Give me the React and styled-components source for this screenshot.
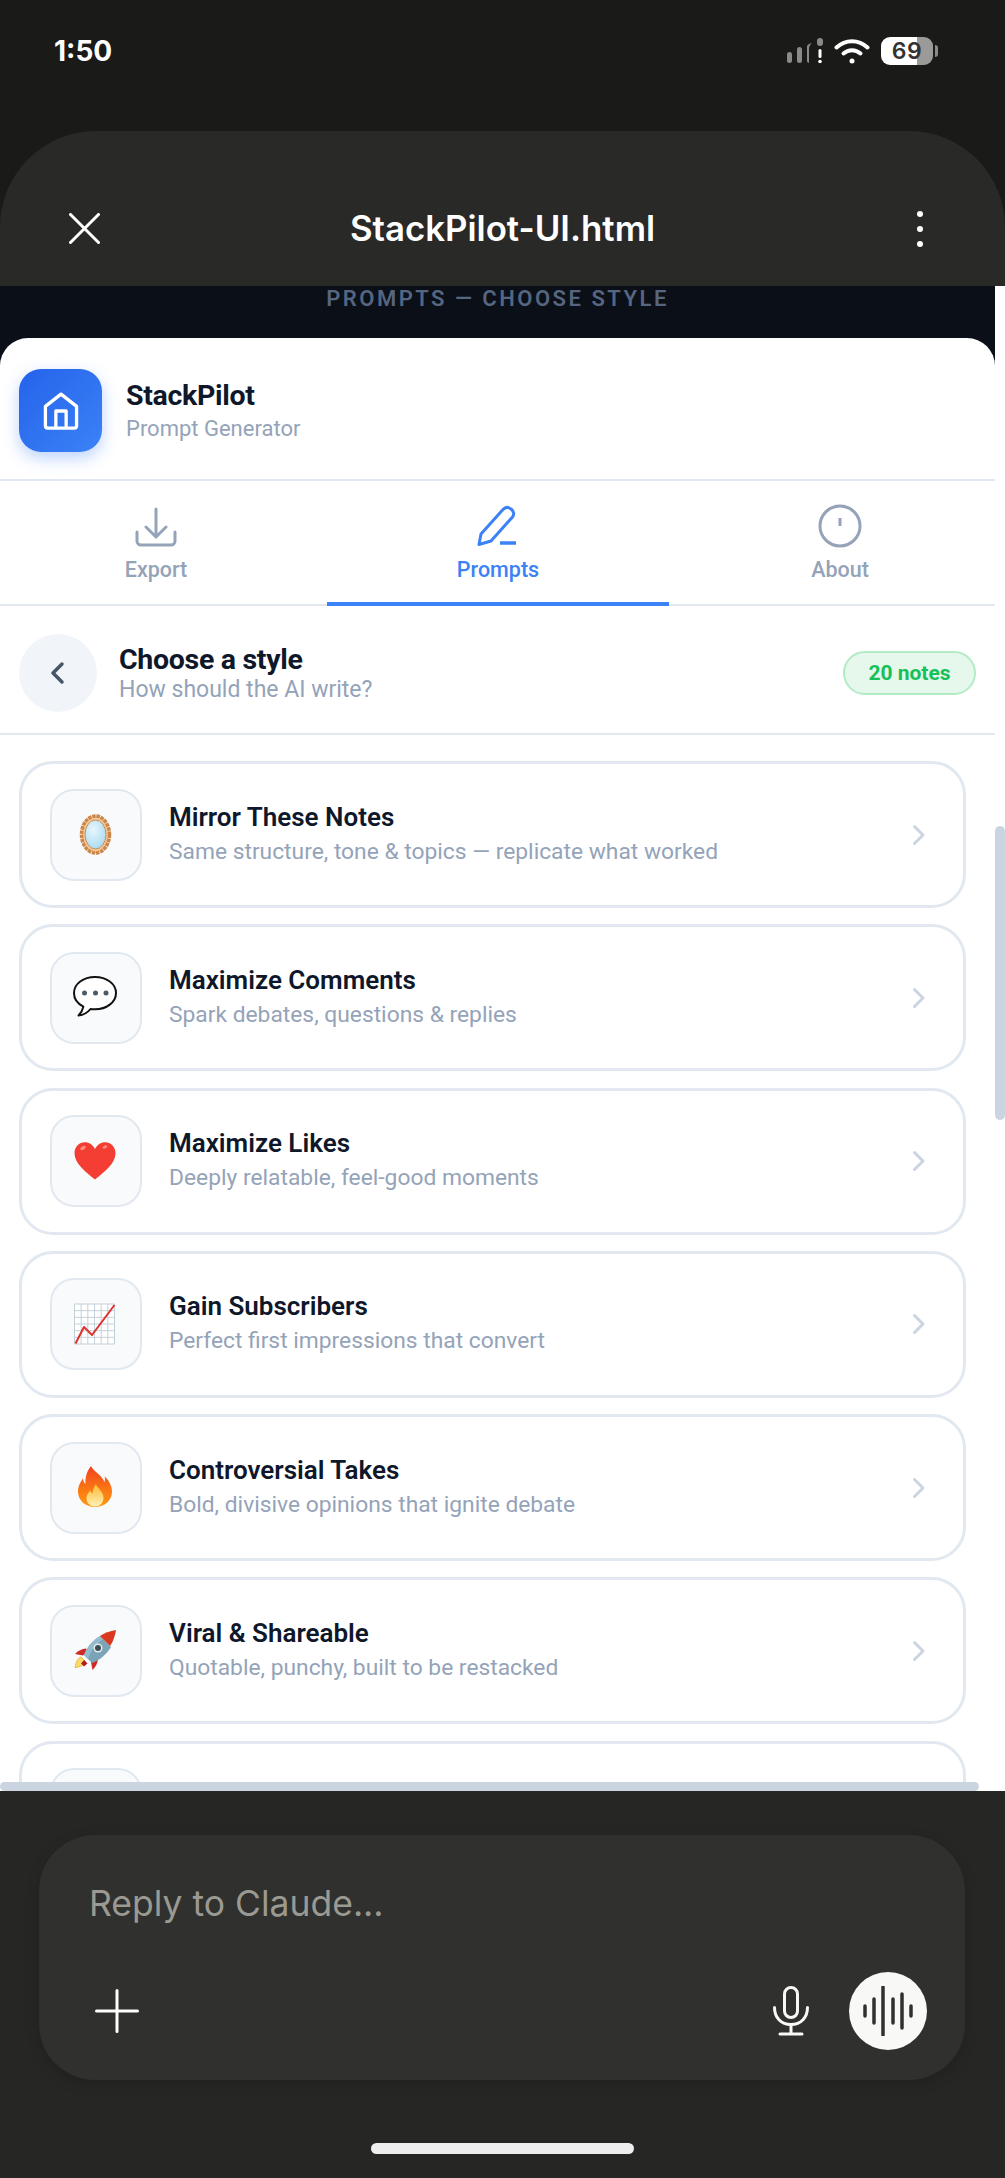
import React from "react";
import styled, { createGlobalStyle } from "styled-components";

const GlobalStyle = createGlobalStyle`
  html, body {
    margin: 0;
    padding: 0;
    background: #1a1a19;
  }
  * {
    box-sizing: border-box;
  }
`;

const Screen = styled.div`
  width: 1005px;
  height: 2178px;
  display: flex;
  flex-direction: column;
  overflow: hidden;
  background: #1a1a19;
  font-family: Inter, "Liberation Sans", sans-serif;
`;

const StatusBar = styled.div`
  height: 131px;
  flex: none;
  display: flex;
  justify-content: space-between;
  align-items: flex-start;
  padding: 35px 72px 0 54px;
`;

const Time = styled.div`
  color: #fff;
  font-size: 28px;
  font-weight: 700;
  line-height: 32px;
`;

const StatusIcons = styled.div`
  display: flex;
  align-items: center;
  gap: 11px;
  margin-top: 2px;
`;

const Battery = styled.div`
  width: 52px;
  height: 28px;
  border-radius: 9px;
  background: linear-gradient(90deg, #fff 69%, #9a9a98 69%);
  color: #333;
  font-size: 23px;
  font-weight: 600;
  line-height: 28px;
  text-align: center;
  letter-spacing: 0.5px;
  position: relative;
  &::after {
    content: "";
    position: absolute;
    left: 54px;
    top: 8px;
    width: 3px;
    height: 12px;
    border-radius: 0 3px 3px 0;
    background: #8a8a88;
  }
`;

const ViewerHeader = styled.div`
  height: 155px;
  flex: none;
  background: #292928;
  border-radius: 96px 96px 0 0;
  display: flex;
  align-items: center;
  justify-content: space-between;
  padding: 40px 82px 0 69px;
  position: relative;
`;

const ViewerTitle = styled.div`
  position: absolute;
  left: 0;
  right: 0;
  top: 75px;
  text-align: center;
  color: #fff;
  font-size: 34.8px;
  font-weight: 600;
  line-height: 44px;
`;

const Dots = styled.div`
  display: flex;
  flex-direction: column;
  gap: 9px;
  span {
    width: 6px;
    height: 6px;
    border-radius: 50%;
    background: #fff;
  }
`;

const Preview = styled.div`
  flex: 1;
  min-height: 0;
  display: flex;
  background: #fff;
  position: relative;
`;

const PreviewColumn = styled.div`
  width: 995px;
  flex: none;
  display: flex;
  flex-direction: column;
  background: #0b0f17;
  overflow: hidden;
  font-family: Roboto, "Liberation Sans", sans-serif;
`;

const Caption = styled.div`
  height: 52px;
  flex: none;
  padding-top: 2px;
  text-align: center;
  color: #566580;
  font-size: 22px;
  font-weight: 600;
  line-height: 22px;
  letter-spacing: 2.5px;
`;

const Sheet = styled.div`
  flex: 1;
  min-height: 0;
  background: #fff;
  border-radius: 28px 28px 0 0;
  display: flex;
  flex-direction: column;
  overflow: hidden;
`;

const BrandRow = styled.div`
  height: 143px;
  flex: none;
  display: flex;
  align-items: center;
  gap: 24px;
  padding: 4px 19px 0;
  border-bottom: 2px solid #e2e8f0;
`;

const BrandIcon = styled.div`
  width: 83px;
  height: 83px;
  border-radius: 22px;
  background: linear-gradient(135deg, #2563eb, #3b82f6);
  box-shadow: 0 6px 16px rgba(59, 130, 246, 0.35);
  display: flex;
  align-items: center;
  justify-content: center;
  svg {
    display: block;
  }
`;

const BrandName = styled.div`
  color: #0f172a;
  font-size: 28.5px;
  font-weight: 700;
  line-height: 34px;
  letter-spacing: -0.3px;
`;

const BrandSub = styled.div`
  color: #94a3b8;
  font-size: 22px;
  line-height: 28px;
  margin-top: 2px;
`;

const Tabs = styled.div`
  height: 125px;
  flex: none;
  margin-left: -15px;
  width: 1026px;
  display: grid;
  grid-template-columns: repeat(3, 342px);
  position: relative;
  &::after {
    content: "";
    position: absolute;
    left: 15px;
    width: 995px;
    bottom: 0;
    height: 2px;
    background: #e2e8f0;
  }
`;

const Tab = styled.div`
  display: flex;
  flex-direction: column;
  align-items: center;
  padding-top: 20px;
  position: relative;
  z-index: 1;
  color: ${(p) => (p.$active ? "#3b82f6" : "#94a3b8")};
  font-size: 21.5px;
  font-weight: 500;
  line-height: 26px;
  border-bottom: 4px solid ${(p) => (p.$active ? "#3b82f6" : "transparent")};
  svg {
    display: block;
    margin-bottom: 6px;
  }
`;

const StyleBar = styled.div`
  height: 129px;
  flex: none;
  display: flex;
  align-items: center;
  padding: 6px 19px 0;
  border-bottom: 2px solid #e2e8f0;
`;

const BackButton = styled.div`
  width: 78px;
  height: 78px;
  border-radius: 50%;
  background: #f1f5f9;
  display: flex;
  align-items: center;
  justify-content: center;
  flex: none;
  margin-right: 22px;
`;

const StyleText = styled.div`
  flex: 1;
  padding-top: 2px;
`;

const StyleTitle = styled.div`
  color: #0f172a;
  font-size: 28.5px;
  font-weight: 700;
  line-height: 31px;
  letter-spacing: -0.3px;
`;

const StyleSub = styled.div`
  color: #94a3b8;
  font-size: 23px;
  line-height: 29px;
`;

const NotesBadge = styled.div`
  width: 133px;
  height: 44px;
  border-radius: 22px;
  background: #e6f7ec;
  border: 2px solid #b3ebc6;
  color: #16c05a;
  font-size: 21px;
  font-weight: 700;
  line-height: 40px;
  text-align: center;
`;

const StyleList = styled.div`
  flex: 1;
  min-height: 0;
  overflow: hidden;
  display: flex;
  flex-direction: column;
  gap: 16.3px;
  padding: 26px 29px 0 19px;
`;

const StyleCard = styled.div`
  height: 147px;
  flex: none;
  display: flex;
  align-items: center;
  border: 3px solid #e2e8f0;
  border-radius: 34px;
  padding: 0 37px 0 28px;
  background: #fff;
`;

const EmojiBox = styled.div`
  width: 92px;
  height: 92px;
  flex: none;
  border: 2px solid #e2e8f0;
  border-radius: 24px;
  background: #f8fafc;
  display: flex;
  align-items: center;
  justify-content: center;
  margin-right: 27px;
  svg {
    display: block;
  }
`;

const CardText = styled.div`
  flex: 1;
  padding-bottom: 2px;
`;

const CardTitle = styled.div`
  color: #0f172a;
  font-size: 26px;
  font-weight: 600;
  line-height: 32px;
`;

const CardSub = styled.div`
  color: #94a3b8;
  font-size: 22.8px;
  line-height: 30px;
  margin-top: 4px;
`;

const ScrollTrack = styled.div`
  width: 10px;
  flex: none;
  padding-top: 540px;
`;

const ScrollThumb = styled.div`
  height: 294px;
  border-radius: 5px;
  background: #cbd5e1;
`;

const HorizontalThumb = styled.div`
  position: absolute;
  left: 0;
  bottom: 0;
  width: 979px;
  height: 9px;
  border-radius: 5px;
  background: #cbd5e1;
`;

const BottomArea = styled.div`
  height: 387px;
  flex: none;
  background: #262624;
  padding: 44px 40px 0 39px;
  display: flex;
  flex-direction: column;
  align-items: center;
`;

const Composer = styled.div`
  width: 100%;
  height: 245px;
  border-radius: 56px;
  background: #30302e;
  box-shadow: 0 4px 14px rgba(0, 0, 0, 0.15);
  padding: 43px 38px 0 50px;
`;

const Placeholder = styled.div`
  color: #9a9a92;
  font-size: 35.5px;
  line-height: 52px;
`;

const ComposerActions = styled.div`
  display: flex;
  align-items: center;
  justify-content: space-between;
  margin-top: 42px;
`;

const ActionsRight = styled.div`
  display: flex;
  align-items: center;
  gap: 38px;
`;

const PlusWrap = styled.div`
  margin-left: 6px;
  svg {
    display: block;
  }
`;

const VoiceButton = styled.div`
  width: 78px;
  height: 78px;
  border-radius: 50%;
  background: #f8f8f6;
  display: flex;
  align-items: center;
  justify-content: center;
`;

const HomeIndicator = styled.div`
  width: 263px;
  height: 11px;
  border-radius: 6px;
  background: #eeeeee;
  margin-top: 63px;
`;

const SignalIcon = () => (
  <svg width="36" height="26" viewBox="0 0 36 26">
    <g fill="#8a8a8a">
      <rect x="0" y="14" width="5" height="11" rx="2.5" />
      <rect x="10" y="9" width="5" height="16" rx="2.5" />
      <path d="M23 25c-2.500-.2-3-1-3-2.500V9c0-1.500 1-3 5-4-2 1.500-3 3.500-3 6v14z" />
      <rect x="30" y="0" width="6" height="8" rx="3" />
    </g>
    <rect x="31.500" y="11" width="3" height="9" rx="1.500" fill="#fff" />
    <circle cx="33" cy="23.500" r="1.800" fill="#fff" />
  </svg>
);

const WifiIcon = () => (
  <svg width="36" height="26" viewBox="0 0 36 26" fill="none" stroke="#fff" strokeWidth="4" strokeLinecap="round">
    <path d="M2.500 9.500C11.500 1 24.500 1 33.500 9.500" />
    <path d="M9.500 15.500C14.500 11 21.500 11 26.500 15.500" />
    <circle cx="18" cy="23" r="2.500" fill="#fff" stroke="none" />
  </svg>
);

const CloseIcon = () => (
  <svg width="31" height="31" viewBox="0 0 31 31" stroke="#fff" strokeWidth="3" strokeLinecap="round">
    <path d="M1.500 1.500l28 28M29.500 1.500l-28 28" />
  </svg>
);

const HouseIcon = () => (
  <svg width="44" height="44" viewBox="0 0 24 24" fill="none" stroke="#fff" strokeWidth="1.800" strokeLinejoin="round">
    <path d="M3.500 9.500 12 2.800l8.500 6.700V20a1.300 1.300 0 0 1-1.300 1.300H4.800A1.300 1.300 0 0 1 3.500 20z" />
    <path d="M9.200 21.300V12h5.600v9.300" />
  </svg>
);

const ExportIcon = () => (
  <svg width="50" height="50" viewBox="0 0 50 50" fill="none" stroke="#94a3b8" strokeWidth="3" strokeLinecap="round" strokeLinejoin="round">
    <path d="M6 31v9a4 4 0 0 0 4 4h30a4 4 0 0 0 4-4v-9" />
    <path d="M25 8v28M15 26l10 10 10-10" />
  </svg>
);

const PenIcon = () => (
  <svg width="50" height="50" viewBox="0 0 50 50" fill="none" stroke="#3b82f6" strokeWidth="3">
    <path d="M6 43.500 8 33 30 8.500c2-2.300 5-2.800 8-.5s3.500 5.500 1.500 8L18 40z" strokeLinejoin="round" />
    <path d="M27 42h16" strokeWidth="3.500" />
  </svg>
);

const AboutIcon = () => (
  <svg width="50" height="50" viewBox="0 0 50 50" fill="none" stroke="#94a3b8" strokeWidth="3">
    <circle cx="25" cy="25" r="20" />
    <path d="M25 17v8" />
  </svg>
);

const BackChevron = () => (
  <svg width="16" height="24" viewBox="0 0 16 24" fill="none" stroke="#475569" strokeWidth="3.500" strokeLinecap="round" strokeLinejoin="round">
    <path d="M12 3 3 12l9 9" />
  </svg>
);

const CardChevron = () => (
  <svg width="14" height="22" viewBox="0 0 14 22" fill="none" stroke="#cbd5e1" strokeWidth="3" strokeLinecap="round" strokeLinejoin="round">
    <path d="M2.500 2.500 11 11l-8.500 8.500" />
  </svg>
);

const Emoji = ({ children }) => (
  <svg width="48" height="48" viewBox="22 22 48 48">
    {children}
  </svg>
);

const MirrorEmoji = () => (
  <Emoji>
    <defs>
      <radialGradient id="glass" cx="0.4" cy="0.35" r="0.8">
        <stop offset="0" stopColor="#e8f7fd" />
        <stop offset="1" stopColor="#9fd6ef" />
      </radialGradient>
    </defs>
    <ellipse cx="45.500" cy="45.500" rx="14" ry="18.500" fill="#f2c79a" stroke="#cc8748" strokeWidth="3.500" strokeDasharray="3.500 0.800" />
    <ellipse cx="45.500" cy="45.500" rx="10.500" ry="14.500" fill="url(#glass)" stroke="#cf8c52" strokeWidth="1" />
  </Emoji>
);

const BalloonEmoji = () => (
  <Emoji>
    <path
      d="M45 25c-11.500 0-21 6.800-21 16 0 5.800 3.700 10.800 9.400 13.600-.6 3.200-2.400 6.200-4.900 8.900 5.200-.5 9.200-3 12-6.500 1.400.2 3 .3 4.500.3 11.500 0 21-7 21-16.300S56.500 25 45 25z"
      fill="#fff"
      stroke="#111"
      strokeWidth="2"
      strokeLinejoin="round"
    />
    <circle cx="34.500" cy="41" r="2.500" fill="#4a5a66" />
    <circle cx="45.500" cy="41" r="2.500" fill="#4a5a66" />
    <circle cx="56" cy="41" r="2.500" fill="#4a5a66" />
  </Emoji>
);

const HeartEmoji = () => (
  <Emoji>
    <path
      d="M45 64.500C36 57 24.500 49 24.500 38c0-6.200 4.800-10.800 10.300-10.800 4.300 0 8 2.500 10.200 6.800 2.200-4.300 5.900-6.800 10.200-6.800 5.500 0 10.300 4.600 10.300 10.800 0 11-11.500 19-20.500 26.500z"
      fill="#f43e33"
    />
    <ellipse cx="33" cy="33" rx="3" ry="1.800" fill="#ff8b80" transform="rotate(-30 33 33)" />
    <ellipse cx="55" cy="32" rx="2.400" ry="1.400" fill="#ff8b80" transform="rotate(-25 55 32)" />
  </Emoji>
);

const gridLines = [0, 1, 2, 3, 4, 5, 6];

const ChartEmoji = () => (
  <Emoji>
    <rect x="24.500" y="26" width="40" height="40" fill="#fff" />
    <g stroke="#c4d0d8" strokeWidth="1">
      {gridLines.map((i) => (
        <React.Fragment key={i}>
          <path d={`M${24.5 + i * 6.67} 26v40`} />
          <path d={`M24.500 ${26 + i * 6.67}h40`} />
        </React.Fragment>
      ))}
    </g>
    <path d="M25.500 65.500 34 49l8 8 22.500-30" fill="none" stroke="#e0312d" strokeWidth="2" strokeLinejoin="round" />
  </Emoji>
);

const FireEmoji = () => (
  <Emoji>
    <defs>
      <linearGradient id="flame" x1="0" y1="0" x2="0" y2="1">
        <stop offset="0" stopColor="#f0411f" />
        <stop offset="0.6" stopColor="#fb7a13" />
        <stop offset="1" stopColor="#fd9a16" />
      </linearGradient>
      <linearGradient id="flameCore" x1="0" y1="0" x2="0" y2="1">
        <stop offset="0" stopColor="#fdb92f" />
        <stop offset="1" stopColor="#fff0b8" />
      </linearGradient>
    </defs>
    <path
      d="M41 24c2 5 10 8 13.500 16 .7-2 .5-3.500.2-5.500C59 38.500 62 44 62 49.500 62 58.500 54.500 65 45 65s-17-6.500-17-15.500c0-5.500 2.500-9.500 5-13 .3 2.500 1 4.300 2.500 5.500C35 35 37 29 41 24z"
      fill="url(#flame)"
    />
    <path
      d="M46 42c.5 3.500 7.500 7 7.500 14 0 5-4 8.500-8.500 8.500s-8.500-3.500-8.500-8.500c0-3.500 2-5.500 4-7.500.3 1.500 1 2.500 2 3 .2-3.500 1.500-7 3.500-9.500z"
      fill="url(#flameCore)"
    />
  </Emoji>
);

const RocketEmoji = () => (
  <Emoji>
    <path d="M31 52c-3 1-5 5-6 10.500 5-.5 9-2.500 11-5.500z" fill="#f9dc6a" stroke="#e9b93a" strokeWidth="1" />
    <path d="M36 43.500c-4 .4-8 2.200-11 5.500l8 1.500 5-4z" fill="#cf2a26" />
    <path d="M48 54c-.4 4-2.200 8-5.500 11l-1.500-8 4-5z" fill="#cf2a26" />
    <path d="M34 55l-3 3.500 3 3 3.500-3z" fill="#b0201e" />
    <path d="M34 50c3-8 9-15 16-19l11 11c-4 7-11 13-19 16z" fill="#7ba4b8" />
    <path d="M34 50c3-8 9-15 16-19l3 3c-7 5-12 11-15 20z" fill="#94bccd" />
    <path d="M50 31c4-3 10-5 16-6-1 6-3 12-6 16z" fill="#d8391f" />
    <circle cx="48" cy="43" r="4.500" fill="#e4edf1" />
    <circle cx="48" cy="43" r="3" fill="#3d4d58" />
  </Emoji>
);

const BlankEmoji = () => null;

const MicIcon = () => (
  <svg width="40" height="50" viewBox="0 0 40 50" fill="none" stroke="#f8f8f6" strokeWidth="3" strokeLinecap="round">
    <rect x="13.500" y="1.500" width="13" height="30" rx="6.500" />
    <path d="M3.500 21.500c0 10 6.500 17 16.500 17s16.500-7 16.500-17" />
    <path d="M20 38.500v9M9 48h22" />
  </svg>
);

const waveBars = [
  [2, 5],
  [11, 12],
  [20, 24],
  [30, 12],
  [39, 17],
  [48, 5],
];

const WaveIcon = () => (
  <svg width="50" height="50" viewBox="0 0 50 50" stroke="#30302e" strokeWidth="3.500" strokeLinecap="round">
    {waveBars.map(([x, half]) => (
      <path key={x} d={`M${x} ${25 - half}V${25 + half}`} />
    ))}
  </svg>
);

const PlusIcon = () => (
  <svg width="44" height="44" viewBox="0 0 44 44" stroke="#fff" strokeWidth="3" strokeLinecap="round">
    <path d="M22 1.500v41M1.500 22h41" />
  </svg>
);

const styles = [
  { icon: MirrorEmoji, title: "Mirror These Notes", sub: "Same structure, tone & topics — replicate what worked" },
  { icon: BalloonEmoji, title: "Maximize Comments", sub: "Spark debates, questions & replies" },
  { icon: HeartEmoji, title: "Maximize Likes", sub: "Deeply relatable, feel-good moments" },
  { icon: ChartEmoji, title: "Gain Subscribers", sub: "Perfect first impressions that convert" },
  { icon: FireEmoji, title: "Controversial Takes", sub: "Bold, divisive opinions that ignite debate" },
  { icon: RocketEmoji, title: "Viral & Shareable", sub: "Quotable, punchy, built to be restacked" },
  { icon: BlankEmoji, title: "", sub: "" },
];

const App = () => {
  return (
    <>
      <GlobalStyle />
      <Screen>
        <StatusBar>
          <Time>1:50</Time>
          <StatusIcons>
            <SignalIcon />
            <WifiIcon />
            <Battery>69</Battery>
          </StatusIcons>
        </StatusBar>

        <ViewerHeader>
          <CloseIcon />
          <ViewerTitle>StackPilot-UI.html</ViewerTitle>
          <Dots>
            <span />
            <span />
            <span />
          </Dots>
        </ViewerHeader>

        <Preview>
          <PreviewColumn>
            <Caption>PROMPTS — CHOOSE STYLE</Caption>
            <Sheet>
              <BrandRow>
                <BrandIcon>
                  <HouseIcon />
                </BrandIcon>
                <div>
                  <BrandName>StackPilot</BrandName>
                  <BrandSub>Prompt Generator</BrandSub>
                </div>
              </BrandRow>

              <Tabs>
                <Tab>
                  <ExportIcon />
                  Export
                </Tab>
                <Tab $active>
                  <PenIcon />
                  Prompts
                </Tab>
                <Tab>
                  <AboutIcon />
                  About
                </Tab>
              </Tabs>

              <StyleBar>
                <BackButton>
                  <BackChevron />
                </BackButton>
                <StyleText>
                  <StyleTitle>Choose a style</StyleTitle>
                  <StyleSub>How should the AI write?</StyleSub>
                </StyleText>
                <NotesBadge>20 notes</NotesBadge>
              </StyleBar>

              <StyleList>
                {styles.map(({ icon: Icon, title, sub }, i) => (
                  <StyleCard key={i}>
                    <EmojiBox>
                      <Icon />
                    </EmojiBox>
                    <CardText>
                      <CardTitle>{title}</CardTitle>
                      <CardSub>{sub}</CardSub>
                    </CardText>
                    <CardChevron />
                  </StyleCard>
                ))}
              </StyleList>
            </Sheet>
          </PreviewColumn>
          <ScrollTrack>
            <ScrollThumb />
          </ScrollTrack>
          <HorizontalThumb />
        </Preview>

        <BottomArea>
          <Composer>
            <Placeholder>Reply to Claude...</Placeholder>
            <ComposerActions>
              <PlusWrap>
                <PlusIcon />
              </PlusWrap>
              <ActionsRight>
                <MicIcon />
                <VoiceButton>
                  <WaveIcon />
                </VoiceButton>
              </ActionsRight>
            </ComposerActions>
          </Composer>
          <HomeIndicator />
        </BottomArea>
      </Screen>
    </>
  );
};

export default App;
